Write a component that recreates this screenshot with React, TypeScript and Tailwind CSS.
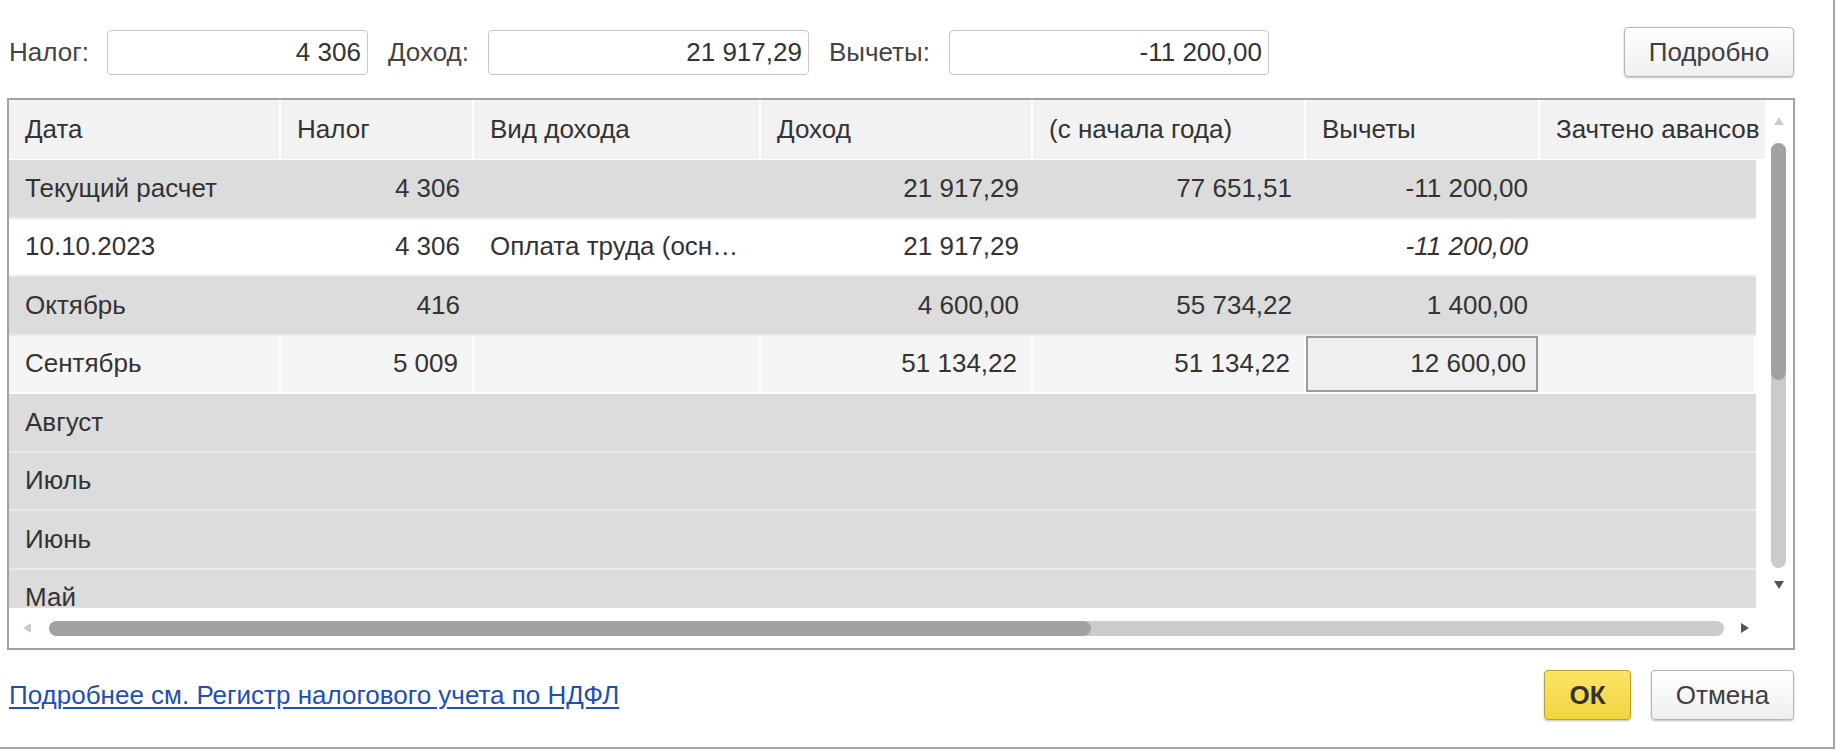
import React from "react";

type Row = {
  date: string;
  tax?: string;
  kind?: string;
  income?: string;
  ytd?: string;
  ded?: string;
  tone: "gray" | "white" | "light";
  italicDed?: boolean;
  selectedDed?: boolean;
};

const rows: Row[] = [
  { date: "Текущий расчет", tax: "4 306", income: "21 917,29", ytd: "77 651,51", ded: "-11 200,00", tone: "gray" },
  { date: "10.10.2023", tax: "4 306", kind: "Оплата труда (осн…", income: "21 917,29", ded: "-11 200,00", tone: "white", italicDed: true },
  { date: "Октябрь", tax: "416", income: "4 600,00", ytd: "55 734,22", ded: "1 400,00", tone: "gray" },
  { date: "Сентябрь", tax: "5 009", income: "51 134,22", ytd: "51 134,22", ded: "12 600,00", tone: "light", selectedDed: true },
  { date: "Август", tone: "gray" },
  { date: "Июль", tone: "gray" },
  { date: "Июнь", tone: "gray" },
  { date: "Май", tone: "gray" },
];

const headers = ["Дата", "Налог", "Вид дохода", "Доход", "(с начала года)", "Вычеты", "Зачтено авансов"];

const cols = "grid grid-cols-[272px_193px_287px_272px_273px_234px_216px]";

function Field({ width, value }: { width: string; value: string }) {
  return (
    <div className={`${width} h-[45px] border border-[#c9c9c9] rounded-[4px] bg-white flex items-center justify-end pr-[6px] text-[#333]`}>
      {value}
    </div>
  );
}

function TableRow({ row }: { row: Row }) {
  const bg =
    row.tone === "gray" ? "bg-[#dcdcdc] border-[#e9e9e9]" : row.tone === "white" ? "bg-white border-[#e9e9e9]" : "bg-[#f5f5f5] border-[#ffffff]";
  const sep = row.tone === "light" ? "border-r-2 border-white" : "";
  return (
    <div className={`${cols} h-[58.5px] border-b-2 ${bg}`}>
      <div className={`flex items-center pl-[16px] ${sep}`}>{row.date}</div>
      <div className={`flex items-center justify-end pr-[14px] ${sep}`}>{row.tax}</div>
      <div className={`flex items-center pl-[16px] pr-[20px] ${sep}`}>
        <span className="truncate">{row.kind}</span>
      </div>
      <div className={`flex items-center justify-end pr-[14px] ${sep}`}>{row.income}</div>
      <div className={`flex items-center justify-end pr-[14px] ${sep}`}>{row.ytd}</div>
      {row.selectedDed ? (
        <div className="flex items-center justify-end pr-[10px] border-2 border-[#9c9c9c] bg-[#efefef] mr-[2px]">{row.ded}</div>
      ) : (
        <div className={`flex items-center justify-end pr-[12px] ${sep} ${row.italicDed ? "italic" : ""}`}>{row.ded}</div>
      )}
      <div className={`${sep}`}></div>
    </div>
  );
}

export default function App() {
  return (
    <div className="w-[1835px] h-[749px] bg-white border-r-2 border-b-2 border-[#a5a5a5] text-[26px] text-[#333] font-['Liberation_Sans',Arial,sans-serif] overflow-hidden">
      <div className="ml-[7px] w-[1788px] flex flex-col">
        {/* top fields */}
        <div className="flex items-center h-[50px] mt-[27px] pl-[2px] pr-[1px] text-[#444]">
          <span>Налог:</span>
          <div className="ml-[18px]"><Field width="w-[261px]" value="4 306" /></div>
          <span className="ml-[20px]">Доход:</span>
          <div className="ml-[19px]"><Field width="w-[321px]" value="21 917,29" /></div>
          <span className="ml-[20px]">Вычеты:</span>
          <div className="ml-[19px]"><Field width="w-[320px]" value="-11 200,00" /></div>
          <button className="ml-auto w-[170px] h-[50px] rounded-[4px] border border-[#b5b5b5] bg-gradient-to-b from-white to-[#efefef] shadow-[0_1px_2px_rgba(0,0,0,0.25)] text-[#404040]">
            Подробно
          </button>
        </div>

        {/* table */}
        <div className="mt-[21px] h-[552px] border-2 border-[#a3a3a3] flex flex-col">
          <div className="flex h-[508px]">
            <div className="w-[1747px] flex flex-col">
              <div className={`${cols} h-[60px] bg-[#f2f2f2] border-b border-white`}>
                {headers.map((h, i) => (
                  <div
                    key={h}
                    className={`flex items-center pl-[16px] whitespace-nowrap ${i < 6 ? "border-r-2 border-white overflow-hidden" : "-mr-[9px] bg-[#f2f2f2] relative z-10"}`}
                  >
                    {h}
                  </div>
                ))}
              </div>
              <div className="h-[448px] overflow-hidden">
                {rows.map((r) => (
                  <TableRow key={r.date} row={r} />
                ))}
              </div>
            </div>
            {/* vertical scrollbar */}
            <div className="w-[37px] flex flex-col">
              <svg className="ml-[17px] mt-[16px]" width="12" height="10" viewBox="0 0 12 10">
                <polygon points="6,1 11,9 1,9" fill="#cbcbcb" />
              </svg>
              <div className="relative ml-[15px] mt-[17px] w-[15px] h-[425px] rounded-full bg-[#cbcbcb]">
                <div className="absolute left-0 top-0 w-[15px] h-[237px] rounded-full bg-[#a2a2a2]" />
              </div>
              <svg className="ml-[17px] mt-[12px]" width="12" height="10" viewBox="0 0 12 10">
                <polygon points="1,1 11,1 6,9" fill="#555" />
              </svg>
            </div>
          </div>
          {/* horizontal scrollbar */}
          <div className="flex items-center h-[40px]">
            <svg className="ml-[13px]" width="10" height="12" viewBox="0 0 10 12">
              <polygon points="9,1 9,11 1,6" fill="#cbcbcb" />
            </svg>
            <div className="relative ml-[17px] w-[1675px] h-[15px] rounded-full bg-[#cbcbcb]">
              <div className="absolute left-0 top-0 h-[15px] w-[1042px] rounded-full bg-[#a2a2a2]" />
            </div>
            <svg className="ml-[16px]" width="10" height="12" viewBox="0 0 10 12">
              <polygon points="1,1 1,11 9,6" fill="#555" />
            </svg>
          </div>
        </div>

        {/* bottom */}
        <div className="flex items-center h-[50px] mt-[20px] pl-[2px] pr-[1px]">
          <a href="#" className="text-[#1e4fb5] underline underline-offset-[3px]">
            Подробнее см. Регистр налогового учета по НДФЛ
          </a>
          <button className="ml-auto w-[87px] h-[50px] rounded-[4px] border border-[#b8a22c] bg-gradient-to-b from-[#fbe565] to-[#f1d43e] shadow-[0_1px_2px_rgba(0,0,0,0.25)] font-bold text-[#333]">
            ОК
          </button>
          <button className="ml-[20px] w-[143px] h-[50px] rounded-[4px] border border-[#b5b5b5] bg-gradient-to-b from-white to-[#efefef] shadow-[0_1px_2px_rgba(0,0,0,0.25)] text-[#404040]">
            Отмена
          </button>
        </div>
      </div>
    </div>
  );
}
